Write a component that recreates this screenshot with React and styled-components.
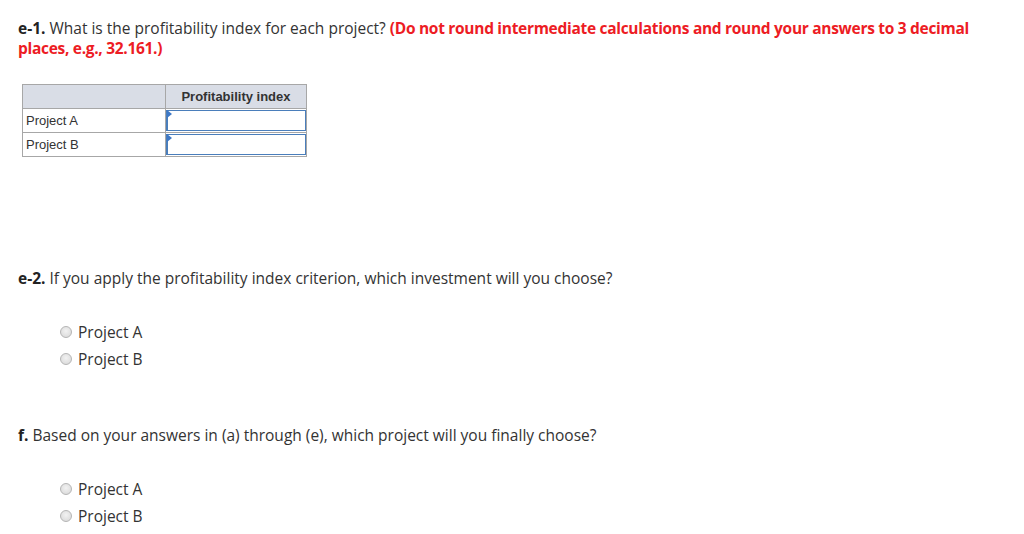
import * as React from 'react';
import styled, { createGlobalStyle } from 'styled-components';

const Global = createGlobalStyle`
    body {
        margin: 0;
        background: #FFFFFF;
        font-family: "Open Sans", Lato, sans-serif;
        font-variant-ligatures: none;
        color: #333333;
    }
`;

const Page = styled.div`
    padding: 18px 0 0 18px;
    width: 1000px;
`;

const Question = styled.div`
    font-size: 15.5px;
    line-height: 20px;
    color: #333333;
    margin-top: ${p => p.mt || '0px'};
    width: 990px;
`;

const Label = styled.b`
    font-weight: 700;
    color: #222222;
`;

const Note = styled.b`
    font-weight: 700;
    color: #ED1C24;
    letter-spacing: -0.3px;
`;

const Table = styled.table`
    border-collapse: collapse;
    margin: 26px 0 0 4px;
    font-family: Arial, "Liberation Sans", sans-serif;
    font-size: 13px;
`;

const HeadCell = styled.th`
    background: #D9DDE6;
    border: 1px solid #A7A7A7;
    height: 23px;
    padding: 0;
    font-weight: 700;
    color: #333333;
    width: ${p => p.w};
    text-align: center;
`;

const NameCell = styled.td`
    border: 1px solid #A7A7A7;
    height: 23px;
    padding: 0 0 0 3px;
    color: #333333;
`;

const InputCell = styled.td`
    border: 1px solid #A7A7A7;
    padding: 0;
    height: 23px;
`;

const Field = styled.div`
    height: 19px;
    border: 1px solid #4A7EBB;
    border-left-width: 2px;
    position: relative;
`;

const Flag = styled.span`
    position: absolute;
    left: -1px;
    top: -1px;
    width: 0;
    height: 0;
    border-top: 4px solid transparent;
    border-bottom: 4px solid transparent;
    border-left: 5px solid #3E78C6;
`;

const Options = styled.div`
    margin: ${p => p.mt} 0 0 42px;
    display: flex;
    flex-direction: column;
    gap: 7px;
`;

const Option = styled.label`
    display: flex;
    align-items: center;
    gap: 6px;
    font-size: 15.5px;
    line-height: 20px;
    color: #333333;
`;

const Radio = styled.span`
    width: 12px;
    height: 12px;
    border-radius: 50%;
    border: 1px solid #B5B5B5;
    background: radial-gradient(circle at 50% 40%, #F2F2F2, #D6D6D6);
    box-sizing: border-box;
`;

function Choices({ mt }) {
    return (
        <Options mt={mt}>
            <Option><Radio />Project A</Option>
            <Option><Radio />Project B</Option>
        </Options>
    );
}

export default function App() {
    return (
        <>
            <Global />
            <Page>
                <Question>
                    <Label>e-1.</Label> What is the profitability index for each project? <Note>(Do not round intermediate calculations and round your answers to 3 decimal<br />places, e.g., 32.161.)</Note>
                </Question>

                <Table>
                    <thead>
                        <tr>
                            <HeadCell w='142px'></HeadCell>
                            <HeadCell w='140px'>Profitability index</HeadCell>
                        </tr>
                    </thead>
                    <tbody>
                        <tr>
                            <NameCell>Project A</NameCell>
                            <InputCell><Field><Flag /></Field></InputCell>
                        </tr>
                        <tr>
                            <NameCell>Project B</NameCell>
                            <InputCell><Field><Flag /></Field></InputCell>
                        </tr>
                    </tbody>
                </Table>

                <Question mt='111px'>
                    <Label>e-2.</Label> If you apply the profitability index criterion, which investment will you choose?
                </Question>
                <Choices mt='34px' />

                <Question mt='56px'>
                    <Label>f.</Label> Based on your answers in (a) through (e), which project will you finally choose?
                </Question>
                <Choices mt='34px' />
            </Page>
        </>
    );
}
